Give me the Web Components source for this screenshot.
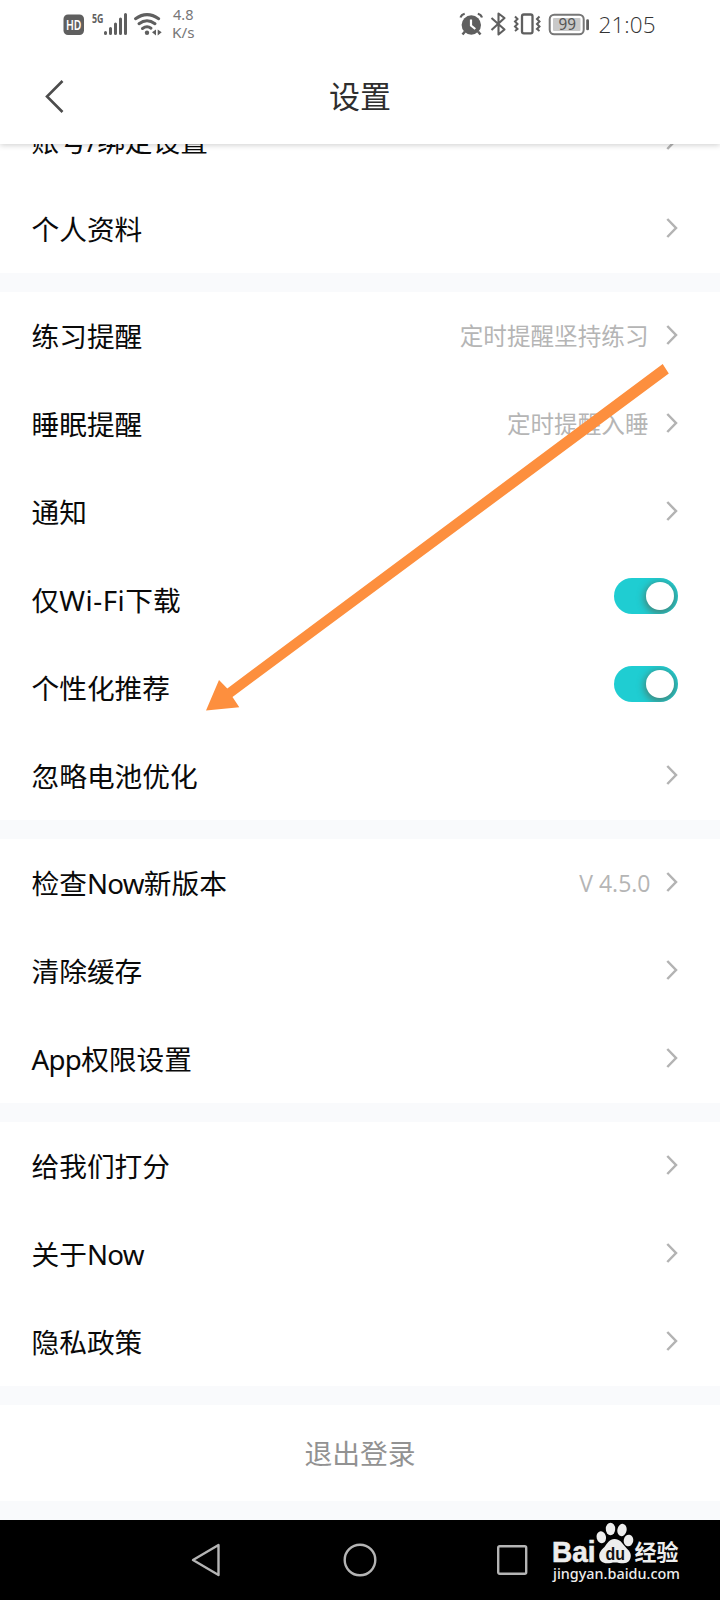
<!DOCTYPE html>
<html lang="zh-CN">
<head>
<meta charset="utf-8">
<title>设置</title>
<style>
html,body{margin:0;padding:0;background:#fff}
body{width:720px;height:1600px;overflow:hidden;font-family:"Noto Sans","Noto Sans CJK SC",sans-serif}
</style>
</head>
<body>
<settings-screen></settings-screen>
<script>
const define = (name, html) => {
  const t = document.createElement('template');
  t.innerHTML = html;
  customElements.define(name, class extends HTMLElement {
    constructor() {
      super();
      this.attachShadow({ mode: 'open' }).append(t.content.cloneNode(true));
    }
  });
};

define('status-bar', `
<style>
:host{display:flex;justify-content:space-between;height:48px;padding:0 50px 0 62px;box-sizing:border-box;color:#5f5f5f}
svg{display:block}
text{font-family:"Noto Sans",sans-serif}
.light{font-family:"Open Sans","Noto Sans",sans-serif;font-weight:300}
</style>
<svg width="140" height="48" viewBox="62 0 140 48" fill="#5f5f5f">
  <rect x="63.500" y="14.500" width="20.500" height="20.500" rx="4.500"/>
  <text x="66" y="30" font-size="13.500" font-weight="600" fill="#fff" textLength="15.500" lengthAdjust="spacingAndGlyphs">HD</text>
  <text x="92" y="23" font-size="13" font-weight="700" textLength="11.500" lengthAdjust="spacingAndGlyphs">5G</text>
  <g stroke="#5f5f5f" stroke-width="3" stroke-linecap="round">
    <path d="M105.500 32.500v1M110.500 28.500v5M115.500 24v9.500M120.500 19v14.500M125.500 14.500v19"/>
  </g>
  <g fill="none" stroke="#5f5f5f" stroke-width="3" stroke-linecap="round">
    <path d="M135.500 18.700Q147 10.500 158.700 18.700M139 23.700Q147 17.700 155 23.700M142.500 28.500Q147 25.200 151 28.200"/>
  </g>
  <circle cx="147" cy="32.800" r="2.200"/>
  <path d="M152 32.300l4-2.800v6zM157.700 29.500l4 2.800-4 3.200z"/>
  <text x="173" y="20" font-size="15" fill="#777" textLength="20.500" lengthAdjust="spacingAndGlyphs">4.8</text>
  <text x="172" y="38" font-size="15" fill="#777" textLength="22.500" lengthAdjust="spacingAndGlyphs">K/s</text>
</svg>
<svg width="212" height="48" viewBox="458 0 212 48" fill="none" stroke="#5f5f5f" stroke-width="2">
  <circle cx="471.300" cy="25" r="9.700" fill="#5f5f5f" stroke="none"/>
  <path d="M460.500 17.500q1-3 4.200-3.800M482 17.500q-1-3-4.200-3.800" stroke-width="2.200"/>
  <path d="M465 31.500l-2.500 3M478 31.500l2.500 3" stroke-width="2.500"/>
  <path d="M471 19.500v6l4.300 3.500" stroke="#fff" stroke-width="2.200"/>
  <path d="M491.500 18l13 11.500-6 5v-21l6 4.500-13 12" stroke-width="2.100" stroke-linejoin="round"/>
  <rect x="522" y="14.500" width="10.500" height="18.800" rx="1.800" stroke-width="2.300"/>
  <path d="M515 16.500l2.500 2.500-2.500 2.500 2.500 2.500-2.500 2.500 2.500 2.500-2.500 2M539.500 16.500l-2.500 2.500 2.500 2.500-2.500 2.500 2.500 2.500-2.500 2.500 2.500 2"/>
  <rect x="549.700" y="14.700" width="34" height="19.600" rx="4.500" stroke="#777"/>
  <rect x="553" y="18" width="27.500" height="13" rx="1" fill="#c9c9c9" stroke="none"/>
  <rect x="586.200" y="19.300" width="2.800" height="11" rx="1.300" fill="#5f5f5f" stroke="none"/>
  <g stroke="none" fill="#5f5f5f">
  <text x="558.500" y="30" font-size="16" fill="#555" textLength="17.500" lengthAdjust="spacingAndGlyphs">99</text>
  <text class="light" x="598.500" y="32.700" font-size="22.500" fill="#333" textLength="57" lengthAdjust="spacing">21:05</text></g>
</svg>`);

define('title-bar', `
<style>
:host{display:grid;grid-template-columns:110px 1fr 110px;align-items:center;height:96px;background:#fff}
svg{display:block;margin-left:44px}
h1{margin:0;text-align:center;font-size:31px;line-height:40px;font-weight:400;color:#2e2e2e}
</style>
<svg width="24" height="36" fill="none" stroke="#4c4c4c" stroke-width="2.600"><path d="M18.500 3L3 18.500l15.500 15.500"/></svg>
<h1><slot></slot></h1>`);

define('setting-group', `
<style>:host{display:block;background:#fff;border-bottom:19px solid #f9fafc}</style><slot></slot>`);

define('setting-row', `
<style>
:host{display:flex;align-items:center;height:88px;box-sizing:border-box;padding:0 42px 0 31.500px;color:#0a0a0a;font-size:27.700px;line-height:40px;white-space:nowrap}
.label{flex:1}
.value{font-size:23.600px;color:#b5b5b5;margin-right:17.500px}
svg{display:block;margin-bottom:2px}
:host([toggle]) svg,:host([toggle]) .value{display:none}
</style>
<div class="label"><slot></slot></div>
<div class="value"><slot name="value"></slot></div>
<svg width="12" height="20" fill="none" stroke="#b3b3b3" stroke-width="2.500"><path d="M1.300 1l8.700 9-8.700 9"/></svg>
<slot name="switch"></slot>`);

define('toggle-switch', `
<style>
:host{display:flex;align-items:center;justify-content:flex-end;width:64px;height:36px;box-sizing:border-box;padding-right:4px;border-radius:18px;background:#1fcdd2;overflow:hidden;margin-bottom:8px}
i{display:block;width:28px;height:28px;border-radius:50%;background:#fff;box-shadow:0 2px 7px 2px rgba(85,95,75,.6)}
</style><i></i>`);

define('logout-button', `
<style>
:host{display:flex;align-items:center;justify-content:center;height:96px;box-sizing:border-box;font-size:27.800px;line-height:40px;color:#929292}
</style><slot></slot>`);

define('nav-bar', `
<style>
:host{display:block;height:80px;background:#000;position:relative}
.keys{display:flex;align-items:center;height:80px;padding:0 191px 0 190px;justify-content:space-between}
.keys svg{display:block}
.keys .home{margin-left:3px}
.mark{position:absolute;left:545px;top:0}
</style>
<div class="keys">
<svg width="32" height="36" fill="none" stroke="#b4b4b4" stroke-width="2.400" stroke-linejoin="round"><path d="M3 18L28.500 3v30z"/></svg>
<svg class="home" width="34" height="34" fill="none" stroke="#b4b4b4" stroke-width="2.400"><circle cx="17" cy="17" r="15.300"/></svg>
<svg width="34" height="34" fill="none" stroke="#b4b4b4" stroke-width="2.400"><rect x="3.200" y="3.200" width="28" height="27.600" rx="1.500"/></svg>
</div>
<svg class="mark" width="150" height="80" viewBox="545 1520 150 80" fill="#ededed">
<text x="552" y="1562" font-family="Liberation Sans,sans-serif" font-weight="700" font-size="29" stroke="#ededed" stroke-width=".6" textLength="43.500" lengthAdjust="spacingAndGlyphs">Bai</text>
<ellipse cx="601.300" cy="1537.300" rx="4.700" ry="6" transform="rotate(-15 601.300 1537.300)"/>
<ellipse cx="610.500" cy="1529" rx="4.700" ry="6.200"/>
<ellipse cx="622" cy="1530" rx="4.600" ry="6.200" transform="rotate(12 622 1530)"/>
<ellipse cx="628.500" cy="1540.500" rx="4.800" ry="5.800" transform="rotate(10 628.500 1540.500)"/>
<path d="M614.500 1539c-5 0-7 4-10 8-3 3-5.300 5-5.300 9 0 5 3.500 7.300 7.800 7.300 3 0 5-.800 8-.800s5 .800 8.500.800c4.500 0 7.300-3 7.300-7.500 0-4-3-6-6-9.500-2.800-3.500-5-7.300-10.300-7.300z"/>
<text x="605.500" y="1559.500" font-family="Liberation Sans,sans-serif" font-size="18" font-weight="700" fill="#111" textLength="19.500" lengthAdjust="spacingAndGlyphs">du</text>
<text x="634.500" y="1560" font-family="Noto Sans CJK SC,sans-serif" font-weight="700" font-size="21.500" textLength="44" lengthAdjust="spacingAndGlyphs">经验</text>
<text x="553" y="1579" font-family="Noto Sans,sans-serif" font-weight="500" font-size="14.500" textLength="127" lengthAdjust="spacingAndGlyphs">jingyan.baidu.com</text>
</svg>`);

define('pointer-arrow', `
<style>:host{display:block;position:absolute;left:200px;top:355px}svg{display:block}</style>
<svg width="480" height="365" viewBox="200 355 480 365"><path fill="#fd8f3e" d="M662.700 364L668.800 373.500 232.500 697 239.300 707.200 206 710.500 219 680 227.300 688.500z"/></svg>`);

define('settings-screen', `
<style>
:host{display:flex;flex-direction:column;position:relative;width:720px;height:1600px;overflow:hidden;background:#fff}
header{position:relative;z-index:1;background:#fff;box-shadow:0 1px 6px rgba(0,0,0,.2)}
main{height:1376px;overflow:hidden;background:#fff}
.first{margin-top:-47px}
.w{letter-spacing:.55px}
.n{letter-spacing:-.7px}
.v{font-family:"Open Sans","Noto Sans",sans-serif;font-size:23px;margin-right:-2px}
</style>
<header><status-bar></status-bar><title-bar>设置</title-bar></header>
<main>
<setting-group class="first"><setting-row>账号/绑定设置</setting-row><setting-row>个人资料</setting-row></setting-group>
<setting-group>
<setting-row>练习提醒<span slot="value">定时提醒坚持练习</span></setting-row>
<setting-row>睡眠提醒<span slot="value">定时提醒入睡</span></setting-row>
<setting-row>通知</setting-row>
<setting-row toggle>仅<span class="w">Wi-Fi</span>下载<toggle-switch slot="switch"></toggle-switch></setting-row>
<setting-row toggle>个性化推荐<toggle-switch slot="switch"></toggle-switch></setting-row>
<setting-row>忽略电池优化</setting-row>
</setting-group>
<setting-group>
<setting-row>检查<span class="n">Now</span>新版本<span slot="value" class="v">V 4.5.0</span></setting-row>
<setting-row>清除缓存</setting-row>
<setting-row><span class="n">App</span>权限设置</setting-row>
</setting-group>
<setting-group><setting-row>给我们打分</setting-row><setting-row>关于<span class="n">Now</span></setting-row><setting-row>隐私政策</setting-row></setting-group>
<setting-group><logout-button>退出登录</logout-button></setting-group>
</main>
<nav-bar></nav-bar>
<pointer-arrow></pointer-arrow>`);
</script>
</body>
</html>
